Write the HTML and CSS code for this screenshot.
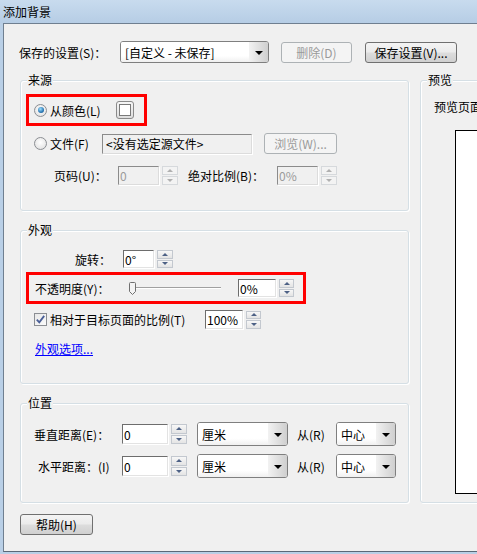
FILE: index.html
```html
<!DOCTYPE html>
<html>
<head>
	<meta charset="utf-8">
	<title>添加背景</title>
	<link rel="stylesheet" href="styles.css">
</head>
<body>
	<div class="titlebar">添加背景</div>
	<div class="client">
		<div class="toprow">
			<span class="lbl-saved">保存的设置(S)：</span>
			<div class="combo combo-saved"><span class="combo-text">[自定义 - 未保存]</span><i class="arrow"></i></div>
			<button class="btn btn-del" disabled>删除(D)</button>
			<button class="btn btn-save">保存设置(V)...</button>
		</div>

		<div class="main">
			<div class="leftcol">
				<!-- 来源 -->
				<div class="group g-source">
					<span class="legend">来源</span>
					<div class="hl hl-color">
						<span class="radio on"></span>
						<span class="opt">从颜色(L)</span>
						<span class="swatch"><i></i></span>
					</div>
					<div class="row row-file">
						<span class="radio"></span>
						<span class="opt lbl-file">文件(F)</span>
						<span class="field field-file off">&lt;没有选定源文件&gt;</span>
						<button class="btn btn-browse" disabled>浏览(W)...</button>
					</div>
					<div class="row row-page">
						<span class="lbl lbl-page">页码(U)：</span>
						<span class="field field-num off grey">0</span>
						<span class="spin off"><b class="up"></b><b class="down"></b></span>
						<span class="lbl lbl-scale">绝对比例(B)：</span>
						<span class="field field-num off grey">0%</span>
						<span class="spin off"><b class="up"></b><b class="down"></b></span>
					</div>
				</div>

				<!-- 外观 -->
				<div class="group g-look">
					<span class="legend">外观</span>
					<div class="row row-rotate">
						<span class="lbl lbl-rotate">旋转：</span>
						<span class="field field-rot">0°</span>
						<span class="spin"><b class="up"></b><b class="down"></b></span>
					</div>
					<div class="hl hl-opacity">
						<span class="lbl lbl-opacity">不透明度(Y)：</span>
						<svg class="slider" width="95" height="14" viewBox="0 0 95 14">
							<line x1="2" y1="5.5" x2="93" y2="5.5" stroke="#a0a0a0"/>
							<line x1="2" y1="6.5" x2="93" y2="6.5" stroke="#ffffff"/>
							<path d="M1.5 1.5 Q1.5 0.5 2.5 0.5 H6.5 Q7.5 0.5 7.5 1.5 V9.5 L4.5 12.5 L1.5 9.5 Z" fill="#f3f3f3" stroke="#707070"/>
						</svg>
						<span class="field field-pct">0%</span>
						<span class="spin"><b class="up"></b><b class="down"></b></span>
					</div>
					<div class="row row-check">
						<span class="check">
							<svg width="9" height="9" viewBox="0 0 9 9"><path d="M0.8 4.6 L3.3 7.4 L8.2 0.9" fill="none" stroke="#4a5f97" stroke-width="1.8"/></svg>
						</span>
						<span class="opt lbl-check">相对于目标页面的比例(T)</span>
						<span class="field field-pct">100%</span>
						<span class="spin"><b class="up"></b><b class="down"></b></span>
					</div>
					<a class="link" href="#">外观选项...</a>
				</div>

				<!-- 位置 -->
				<div class="group g-pos">
					<span class="legend">位置</span>
					<div class="row row-pos">
						<span class="lbl lbl-pos">垂直距离(E)：</span>
						<span class="field field-dist">0</span>
						<span class="spin"><b class="up"></b><b class="down"></b></span>
						<div class="combo combo-unit"><span class="combo-text">厘米</span><i class="arrow"></i></div>
						<span class="lbl lbl-from">从(R)</span>
						<div class="combo combo-from"><span class="combo-text">中心</span><i class="arrow"></i></div>
					</div>
					<div class="row row-pos second">
						<span class="lbl lbl-pos indent">水平距离：(I)</span>
						<span class="field field-dist">0</span>
						<span class="spin"><b class="up"></b><b class="down"></b></span>
						<div class="combo combo-unit"><span class="combo-text">厘米</span><i class="arrow"></i></div>
						<span class="lbl lbl-from">从(R)</span>
						<div class="combo combo-from"><span class="combo-text">中心</span><i class="arrow"></i></div>
					</div>
				</div>
			</div>

			<!-- 预览 -->
			<div class="group g-preview">
				<span class="legend">预览</span>
				<div class="preview-title">预览页面</div>
				<div class="page"></div>
			</div>
		</div>

		<button class="btn btn-help">帮助(H)</button>
	</div>
</body>
</html>
```

FILE: styles.css
```css
*{margin:0;padding:0;}
body{
	width: 477px;
	height: 554px;
	overflow: hidden;
	background: #b9cfe6;
	font-family: "Noto Sans CJK SC", "Microsoft YaHei", sans-serif;
	font-size: 12px;
	color: #000;
}

/* window frame */
.titlebar{
	height: 23px;
	line-height: 23px;
	padding-left: 3px;
	background: linear-gradient(#c8dbee, #b6cde5);
	white-space: nowrap;
}
.client{
	box-sizing: border-box;
	height: 529px;
	margin-left: 3px;
	padding: 17px 0 0 15px;
	overflow: hidden;
	background: #f0f0f0;
	border-top: 1px solid #6f7f90;
	border-left: 1px solid #6f7f90;
	border-bottom: 1px solid #5a6877;
}

/* common controls */
.btn{
	box-sizing: border-box;
	height: 21px;
	border: 1px solid #707070;
	border-radius: 3px;
	background: linear-gradient(#f4f4f4 0%, #ebebeb 48%, #dddddd 52%, #d0d0d0 100%);
	font: inherit;
	color: #000;
	white-space: nowrap;
}
.btn:disabled{
	border-color: #adb2b5;
	background: #f4f4f4;
	color: #9a9a9a;
}
.combo{
	box-sizing: border-box;
	display: flex;
	border: 1px solid #7f7f7f;
	border-radius: 3px;
	background: #fff;
	box-shadow: inset 0 0 0 1px #fff;
	overflow: hidden;
}
.combo-text{
	flex: 1;
	display: flex;
	align-items: center;
	padding-left: 4px;
	white-space: nowrap;
	background: linear-gradient(#ffffff 70%, #f0f0f0);
}
.arrow{
	width: 19px;
	display: flex;
	align-items: center;
	justify-content: center;
	background: linear-gradient(to right, #f2f2f2, #cfcfcf);
}
.arrow::after{
	content: "";
	border-left: 4px solid transparent;
	border-right: 4px solid transparent;
	border-top: 4px solid #000;
	margin-top: 1px;
}
.field{
	box-sizing: border-box;
	display: flex;
	align-items: center;
	padding-left: 1px;
	background: #fff;
	border: 1px solid;
	border-color: #6d6d6d #e3e3e3 #e3e3e3 #6d6d6d;
	box-shadow: 1px 1px 0 #fff;
	white-space: nowrap;
}
.field.off{
	background: #f0f0f0;
	border-color: #8b8b8b #dcdcdc #dcdcdc #8b8b8b;
}
.field.grey{
	color: #9a9a9a;
}
.spin{
	box-sizing: border-box;
	display: flex;
	flex-direction: column;
	width: 16px;
	margin-left: 3px;
	gap: 1px;
}
.spin b{
	flex: 1;
	display: flex;
	align-items: center;
	justify-content: center;
	border: 1px solid #c3c8cf;
	background: linear-gradient(#f7f7f7, #e4e4e4);
}
.spin .up::after{
	content: "";
	border-left: 3px solid transparent;
	border-right: 3px solid transparent;
	border-bottom: 3px solid #4d6185;
}
.spin .down::after{
	content: "";
	border-left: 3px solid transparent;
	border-right: 3px solid transparent;
	border-top: 3px solid #4d6185;
}
.spin.off b{
	border-color: #d6d9dc;
	background: #f3f3f3;
}
.spin.off .up::after{border-bottom-color: #b0b0b0;}
.spin.off .down::after{border-top-color: #b0b0b0;}

.radio{
	box-sizing: border-box;
	width: 13px;
	height: 13px;
	flex: none;
	border-radius: 50%;
	border: 1px solid #8b8e93;
	background: radial-gradient(circle at 50% 40%, #ffffff, #dcdcdc);
	display: flex;
	align-items: center;
	justify-content: center;
}
.radio.on::after{
	content: "";
	width: 6px;
	height: 6px;
	border-radius: 50%;
	background: radial-gradient(circle at 40% 35%, #9fe0ff, #2a78b5 60%, #164e7c);
}
.check{
	box-sizing: border-box;
	width: 13px;
	height: 13px;
	flex: none;
	border: 1px solid #8b8e93;
	background: linear-gradient(135deg, #e8e8e8, #fbfbfb);
	display: flex;
	align-items: center;
	justify-content: center;
}
.opt{
	margin-left: 3px;
	white-space: nowrap;
}
.lbl{
	white-space: nowrap;
}

/* top row */
.toprow{
	display: flex;
	align-items: center;
	height: 22px;
}
.lbl-saved{
	width: 101px;
}
.combo-saved{
	width: 149px;
	height: 22px;
}
.btn-del{
	width: 71px;
	margin-left: 12px;
}
.btn-save{
	width: 92px;
	margin-left: 13px;
}

/* layout */
.main{
	display: flex;
	margin-top: 17px;
	margin-left: 1px;
}
.leftcol{
	flex: none;
	width: 389px;
	display: flex;
	flex-direction: column;
	gap: 19px;
}
.group{
	position: relative;
	box-sizing: border-box;
	border: 1px solid #d5dfe5;
	border-radius: 3px;
	box-shadow: inset 1px 1px 0 #fff, 1px 1px 0 #fff;
}
.legend{
	position: absolute;
	top: -9px;
	left: 6px;
	padding: 0 1px;
	line-height: 16px;
	background: #f0f0f0;
}
.row{
	display: flex;
	align-items: center;
}
.hl{
	box-sizing: border-box;
	display: flex;
	align-items: center;
	height: 32px;
	margin-left: 5px;
	border: 3px solid #f00;
}

/* 来源 */
.g-source{
	height: 131px;
}
.hl-color{
	width: 121px;
	margin-top: 13px;
	padding-left: 5px;
}
.swatch{
	box-sizing: border-box;
	width: 18px;
	height: 18px;
	margin-left: auto;
	margin-right: 10px;
	border: 1px solid #8a8a8a;
	border-radius: 3px;
	background: linear-gradient(#f6f6f6, #dedede);
	display: flex;
	align-items: center;
	justify-content: center;
}
.swatch i{
	box-sizing: border-box;
	width: 12px;
	height: 12px;
	border: 1px solid #7a7a7a;
	background: #fff;
}
.row-file{
	height: 21px;
	margin-top: 7px;
	padding-left: 13px;
}
.lbl-file{
	width: 52px;
}
.field-file{
	width: 150px;
	height: 20px;
	padding-left: 3px;
}
.btn-browse{
	width: 73px;
	margin-left: 12px;
}
.row-page{
	height: 19px;
	margin-top: 12px;
	padding-left: 33px;
}
.lbl-page{
	width: 64px;
}
.field-num{
	width: 41px;
	height: 19px;
}
.row-page .spin{
	height: 19px;
}
.lbl-scale{
	width: 89px;
	margin-left: 10px;
}

/* 外观 */
.g-look{
	height: 154px;
}
.row-rotate{
	height: 18px;
	margin-top: 19px;
	padding-left: 54px;
}
.lbl-rotate{
	width: 48px;
}
.field-rot{
	width: 31px;
	height: 18px;
}
.row-rotate .spin{
	height: 18px;
}
.hl-opacity{
	width: 280px;
	margin-top: 4px;
	padding-left: 6px;
}
.lbl-opacity{
	width: 93px;
}
.slider{
	display: block;
	margin-top: 2px;
}
.field-pct{
	width: 38px;
	height: 18px;
}
.hl-opacity .field-pct{
	margin-left: 15px;
}
.hl-opacity .spin,
.row-check .spin{
	width: 15px;
	height: 18px;
}
.row-check{
	height: 19px;
	margin-top: 6px;
	padding-left: 13px;
}
.lbl-check{
	width: 155px;
}
.row-check .field-pct{
	height: 19px;
}
.link{
	display: inline-block;
	margin: 12px 0 0 14px;
	line-height: 16px;
	color: #0000ff;
	text-decoration: underline;
}

/* 位置 */
.g-pos{
	height: 100px;
}
.row-pos{
	height: 24px;
	margin-top: 18px;
	padding-left: 13px;
}
.row-pos.second{
	margin-top: 8px;
}
.lbl-pos{
	width: 88px;
}
.lbl-pos.indent{
	box-sizing: border-box;
	padding-left: 4px;
}
.field-dist{
	width: 46px;
	height: 20px;
}
.row-pos .spin{
	height: 20px;
}
.combo-unit{
	width: 91px;
	height: 24px;
	margin-left: 10px;
}
.lbl-from{
	width: 39px;
	margin-left: 9px;
}
.combo-from{
	width: 60px;
	height: 24px;
}

/* 预览 */
.g-preview{
	flex: none;
	width: 140px;
	height: 423px;
	margin-left: 11px;
	padding: 18px 0 0 13px;
}
.preview-title{
	line-height: 16px;
	white-space: nowrap;
}
.page{
	box-sizing: border-box;
	width: 100px;
	height: 364px;
	margin: 15px 0 0 21px;
	border: 1px solid #000;
	background: #fff;
}

.btn-help{
	width: 73px;
	margin: 11px 0 0 1px;
}
```
